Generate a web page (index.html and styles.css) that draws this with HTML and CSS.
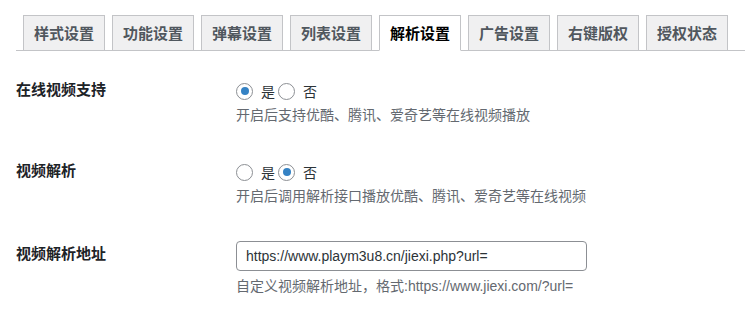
FILE: index.html
```html
<!DOCTYPE html>
<html lang="zh-CN">
<head>
<meta charset="utf-8">
<title>解析设置</title>
<link rel="stylesheet" href="styles.css">
</head>
<body>
<div class="wrap">
  <nav class="tabs">
    <a class="tab">样式设置</a>
    <a class="tab">功能设置</a>
    <a class="tab">弹幕设置</a>
    <a class="tab">列表设置</a>
    <a class="tab active">解析设置</a>
    <a class="tab">广告设置</a>
    <a class="tab">右键版权</a>
    <a class="tab">授权状态</a>
  </nav>

  <div class="row row-first">
    <div class="label">在线视频支持</div>
    <div class="field">
      <div class="options">
        <label class="opt"><span class="radio checked"></span>是</label>
        <label class="opt"><span class="radio"></span>否</label>
      </div>
      <p class="desc">开启后支持优酷、腾讯、爱奇艺等在线视频播放</p>
    </div>
  </div>

  <div class="row">
    <div class="label">视频解析</div>
    <div class="field">
      <div class="options">
        <label class="opt"><span class="radio"></span>是</label>
        <label class="opt"><span class="radio checked"></span>否</label>
      </div>
      <p class="desc">开启后调用解析接口播放优酷、腾讯、爱奇艺等在线视频</p>
    </div>
  </div>

  <div class="row row-input">
    <div class="label">视频解析地址</div>
    <div class="field">
      <input class="text" type="text" value="https://www.playm3u8.cn/jiexi.php?url=">
      <p class="desc desc-input">自定义视频解析地址，格式:https://www.jiexi.com/?url=</p>
    </div>
  </div>
</div>
</body>
</html>
```

FILE: styles.css
```css
html, body {
  margin: 0;
  padding: 0;
  background: #ffffff;
}

body {
  font-family: "Liberation Sans", "Noto Sans CJK SC", sans-serif;
  color: #1d2327;
  font-size: 14px;
}

.wrap {
  padding-left: 16px;
}

.tabs {
  display: flex;
  align-items: flex-end;
  gap: 7px;
  padding: 15px 0 0 7px;
  border-bottom: 1px solid #c3c4c7;
}

.tab {
  box-sizing: border-box;
  height: 35px;
  padding: 0 10px;
  border: 1px solid #c3c4c7;
  border-bottom: none;
  background: #f0f0f1;
  color: #50575e;
  font-family: "Noto Sans CJK SC", sans-serif;
  font-size: 15px;
  font-weight: 700;
  line-height: 34px;
  text-decoration: none;
}

.tab.active {
  background: #ffffff;
  color: #000000;
  height: 36px;
  margin-bottom: -1px;
  border-bottom: 1px solid #ffffff;
}

.row {
  display: grid;
  grid-template-columns: 220px 1fr;
  margin-top: 35px;
}

.row-first {
  margin-top: 28px;
}

.row-input {
  margin-top: 35px;
}

.label {
  font-family: "Noto Sans CJK SC", sans-serif;
  font-size: 15px;
  font-weight: 700;
  line-height: 20px;
  color: #1d2327;
}

.row-input .label {
  padding-top: 2px;
}

.options {
  display: flex;
  align-items: center;
  height: 24px;
}

.opt {
  display: inline-flex;
  align-items: center;
  gap: 8px;
  margin-right: 3px;
  font-size: 14px;
  color: #2c3338;
  font-family: "Noto Sans CJK SC", sans-serif;
}

.radio {
  box-sizing: border-box;
  width: 17px;
  height: 17px;
  border: 1px solid #8c8f94;
  border-radius: 50%;
  background: #fff;
  display: inline-flex;
  align-items: center;
  justify-content: center;
}

.radio.checked::after {
  content: "";
  width: 8px;
  height: 8px;
  border-radius: 50%;
  background: #3582c4;
}

.desc {
  margin: 2px 0 0;
  font-size: 14px;
  line-height: 20px;
  color: #646970;
}

.desc-input {
  margin-top: 5px;
}

.text {
  box-sizing: border-box;
  display: block;
  width: 351px;
  height: 30px;
  margin: 0;
  padding: 0 9px;
  border: 1px solid #8c8f94;
  border-radius: 4px;
  font-family: "Liberation Sans", "Noto Sans CJK SC", sans-serif;
  font-size: 14px;
  color: #2c3338;
  background: #fff;
}
```
